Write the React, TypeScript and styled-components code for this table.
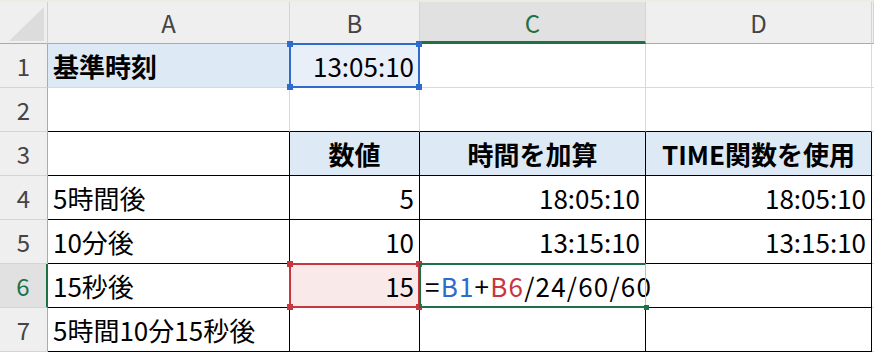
import React from "react";
import styled, { createGlobalStyle, css } from "styled-components";

const FONT = '"Noto Sans CJK JP", "Noto Sans", "Liberation Sans", sans-serif';
const GRID = "#d9d9d9";
const INK = "#000000";
const EXCEL_GREEN = "#1e7145";
const REF_BLUE = "#2f6bcc";
const REF_RED = "#c8363f";
const HEAD_FILL = "#dde9f5";

const GlobalStyle = createGlobalStyle`
  html, body {
    margin: 0;
    padding: 0;
    background: #ffffff;
    overflow: hidden;
  }
  body {
    font-family: ${FONT};
  }
`;

const COLS = "48px 242px 130px 226px 226px 1fr";

const Page = styled.div`
  width: 874px;
  height: 354px;
  display: flex;
  flex-direction: column;
  overflow: hidden;
`;

const RibbonEdge = styled.div`
  height: 2px;
  background: #e8efe2;
`;

const HeaderRow = styled.div`
  display: grid;
  grid-template-columns: ${COLS};
  height: 42px;
`;

const Body = styled.div`
  display: grid;
  grid-template-columns: ${COLS};
  grid-auto-rows: 44px;
`;

const Corner = styled.div`
  background: #efefef;
  border-right: 1px solid #d0d0d0;
  border-bottom: 1px solid #ababab;
  display: flex;
  align-items: flex-end;
  justify-content: flex-end;
  padding: 0 3px 2px 0;
  box-sizing: border-box;
`;

const ColHeader = styled.div<{ $active?: boolean }>`
  box-sizing: border-box;
  display: flex;
  align-items: center;
  justify-content: center;
  font-size: 24px;
  color: #444444;
  background: #efefef;
  border-right: 1px solid #d4d4d4;
  border-bottom: 1px solid #ababab;
  overflow: hidden;
  ${(p) =>
    p.$active &&
    css`
      background: #e1e1e1;
      color: ${EXCEL_GREEN};
      border-bottom: 3px solid ${EXCEL_GREEN};
      padding-top: 2px;
    `}
`;

const RowHeader = styled.div<{ $active?: boolean }>`
  box-sizing: border-box;
  display: flex;
  align-items: center;
  justify-content: center;
  font-size: 24px;
  color: #444444;
  background: #efefef;
  border-right: 1px solid #ababab;
  border-bottom: 1px solid #d4d4d4;
  ${(p) =>
    p.$active &&
    css`
      background: #e1e1e1;
      color: ${EXCEL_GREEN};
      border-right: 2px solid ${EXCEL_GREEN};
    `}
`;

type Align = "left" | "right" | "center";

const Cell = styled.div<{
  $align?: Align;
  $bold?: boolean;
  $fill?: string;
  $right: string;
  $bottom: string;
}>`
  position: relative;
  box-sizing: border-box;
  display: flex;
  align-items: center;
  justify-content: ${(p) =>
    p.$align === "right" ? "flex-end" : p.$align === "center" ? "center" : "flex-start"};
  padding: 0 5px 0 5px;
  font-size: 26px;
  font-weight: ${(p) => (p.$bold ? 700 : 400)};
  color: ${INK};
  white-space: nowrap;
  background: ${(p) => p.$fill ?? "#ffffff"};
  border-right: 1px solid ${(p) => p.$right};
  border-bottom: 1px solid ${(p) => p.$bottom};
`;

const Formula = styled.span`
  position: relative;
  z-index: 2;
  letter-spacing: 1.2px;
`;

const RefToken = styled.span<{ $color: string }>`
  color: ${(p) => p.$color};
`;

/* Coloured frame laid over a referenced or active cell */
const Frame = styled.div<{ $color: string; $sides?: string }>`
  position: absolute;
  top: -1px;
  left: -1px;
  right: -1px;
  bottom: -1px;
  border: 2px solid ${(p) => p.$color};
  ${(p) =>
    p.$sides === "open-right" &&
    css`
      border-right: 1px solid #bdbdbd;
    `}
  pointer-events: none;
  z-index: 3;
`;

const Handle = styled.span<{ $color: string; $v: "top" | "bottom"; $h: "left" | "right"; $size?: number }>`
  position: absolute;
  width: ${(p) => p.$size ?? 6}px;
  height: ${(p) => p.$size ?? 6}px;
  background: ${(p) => p.$color};
  ${(p) => `${p.$v}: -${((p.$size ?? 6) + 2) / 2}px;`}
  ${(p) => `${p.$h}: -${((p.$size ?? 6) + 2) / 2}px;`}
`;

const CornerTriangle = () => (
  <svg width="35" height="34" viewBox="0 0 35 34">
    <polygon points="35,0 35,34 0,34" fill="#dcdcdc" />
  </svg>
);

type Ref = { color: string; handles: "all" | "br"; sides?: string };

type CellData = {
  text?: React.ReactNode;
  align?: Align;
  bold?: boolean;
  fill?: string;
  ref?: Ref;
};

const formula = (
  <Formula>
    =<RefToken $color={REF_BLUE}>B1</RefToken>+<RefToken $color={REF_RED}>B6</RefToken>/24/60/60
  </Formula>
);

const rows: CellData[][] = [
  [
    { text: "基準時刻", bold: true, fill: HEAD_FILL },
    { text: "13:05:10", align: "right", fill: "#e9eff9", ref: { color: REF_BLUE, handles: "all" } },
    {},
    {},
  ],
  [{}, {}, {}, {}],
  [
    {},
    { text: "数値", bold: true, align: "center", fill: HEAD_FILL },
    { text: "時間を加算", bold: true, align: "center", fill: HEAD_FILL },
    { text: "TIME関数を使用", bold: true, align: "center", fill: HEAD_FILL },
  ],
  [
    { text: "5時間後" },
    { text: "5", align: "right" },
    { text: "18:05:10", align: "right" },
    { text: "18:05:10", align: "right" },
  ],
  [
    { text: "10分後" },
    { text: "10", align: "right" },
    { text: "13:15:10", align: "right" },
    { text: "13:15:10", align: "right" },
  ],
  [
    { text: "15秒後" },
    { text: "15", align: "right", fill: "#f9e9e9", ref: { color: REF_RED, handles: "all" } },
    { text: formula, ref: { color: EXCEL_GREEN, handles: "br", sides: "open-right" } },
    {},
  ],
  [{ text: "5時間10分15秒後" }, {}, {}, {}],
];

const columns = ["A", "B", "C", "D"];
const ACTIVE_COL = 2;
const ACTIVE_ROW = 5;

function Handles({ r }: { r: Ref }) {
  if (r.handles === "br") {
    return <Handle $color={r.color} $v="bottom" $h="right" $size={5} />;
  }
  return (
    <>
      <Handle $color={r.color} $v="top" $h="left" />
      <Handle $color={r.color} $v="top" $h="right" />
      <Handle $color={r.color} $v="bottom" $h="left" />
      <Handle $color={r.color} $v="bottom" $h="right" />
    </>
  );
}

export default function App() {
  return (
    <Page>
      <GlobalStyle />
      <RibbonEdge />
      <HeaderRow>
        <Corner>
          <CornerTriangle />
        </Corner>
        {columns.map((c, i) => (
          <ColHeader key={c} $active={i === ACTIVE_COL}>
            {c}
          </ColHeader>
        ))}
        <ColHeader />
      </HeaderRow>
      <Body>
        {rows.map((row, ri) => {
          const inTable = ri >= 2;
          const bottom = ri >= 1 ? INK : GRID;
          return (
            <React.Fragment key={ri}>
              <RowHeader $active={ri === ACTIVE_ROW}>{ri + 1}</RowHeader>
              {row.map((cell, ci) => (
                <Cell
                  key={ci}
                  $align={cell.align}
                  $bold={cell.bold}
                  $fill={cell.fill}
                  $right={inTable ? INK : GRID}
                  $bottom={bottom}
                >
                  {cell.text}
                  {cell.ref && (
                    <Frame $color={cell.ref.color} $sides={cell.ref.sides}>
                      <Handles r={cell.ref} />
                    </Frame>
                  )}
                </Cell>
              ))}
              <Cell $right={GRID} $bottom={GRID} />
            </React.Fragment>
          );
        })}
      </Body>
    </Page>
  );
}
